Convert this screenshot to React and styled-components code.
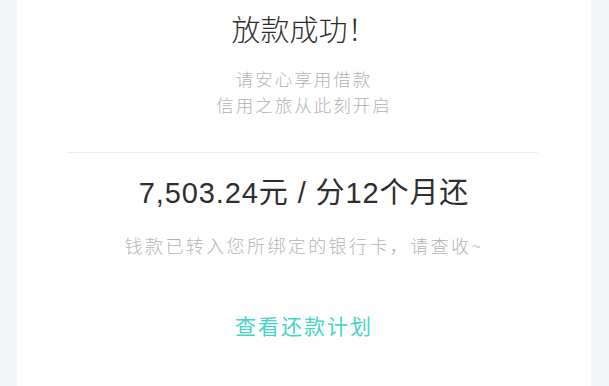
import React from "react";
import styled, { createGlobalStyle } from "styled-components";

const Global = createGlobalStyle`
  html, body { margin: 0; padding: 0; }
  body { background: #f3f5f8; font-family: "Noto Sans CJK SC", "Noto Sans", sans-serif; }
`;

const Page = styled.div`
  height: 386px;
  padding: 0 18px 0 17px;
  box-sizing: border-box;
  background: #f3f5f8;
  overflow: hidden;
`;

const Card = styled.div`
  height: 100%;
  background: #ffffff;
  display: flex;
  flex-direction: column;
  align-items: center;
`;

const Title = styled.h1`
  margin: 12px 0 0;
  font-size: 29px;
  line-height: 32px;
  font-weight: 300;
  color: #2e2e2e;
`;

const Sub = styled.p`
  margin: 22px 0 0;
  font-size: 17.5px;
  line-height: 26px;
  letter-spacing: 2px;
  font-weight: 300;
  color: #b2b2b2;
  text-align: center;
`;

const Divider = styled.hr`
  align-self: stretch;
  margin: 34px 53px 0 50px;
  border: none;
  border-top: 1px solid #ececec;
`;

const Amount = styled.div`
  margin-top: 22px;
  font-family: "Liberation Sans", "Noto Sans CJK SC", sans-serif;
  font-size: 29px;
  line-height: 36px;
  letter-spacing: 0.9px;
  color: #2e2e2e;
`;

const Note = styled.div`
  margin-top: 22px;
  font-size: 18px;
  line-height: 24px;
  letter-spacing: 2.4px;
  font-weight: 300;
  color: #b4b4b4;
`;

const Link = styled.a`
  margin-top: 53px;
  font-size: 21px;
  line-height: 30px;
  letter-spacing: 2px;
  color: #45d5c8;
  text-decoration: none;
  cursor: pointer;
`;

export default function App() {
  return (
    <>
      <Global />
      <Page>
        <Card>
          <Title>放款成功！</Title>
          <Sub>
            请安心享用借款
            <br />
            信用之旅从此刻开启
          </Sub>
          <Divider />
          <Amount>7,503.24元 / 分12个月还</Amount>
          <Note>钱款已转入您所绑定的银行卡，请查收~</Note>
          <Link>查看还款计划</Link>
        </Card>
      </Page>
    </>
  );
}
